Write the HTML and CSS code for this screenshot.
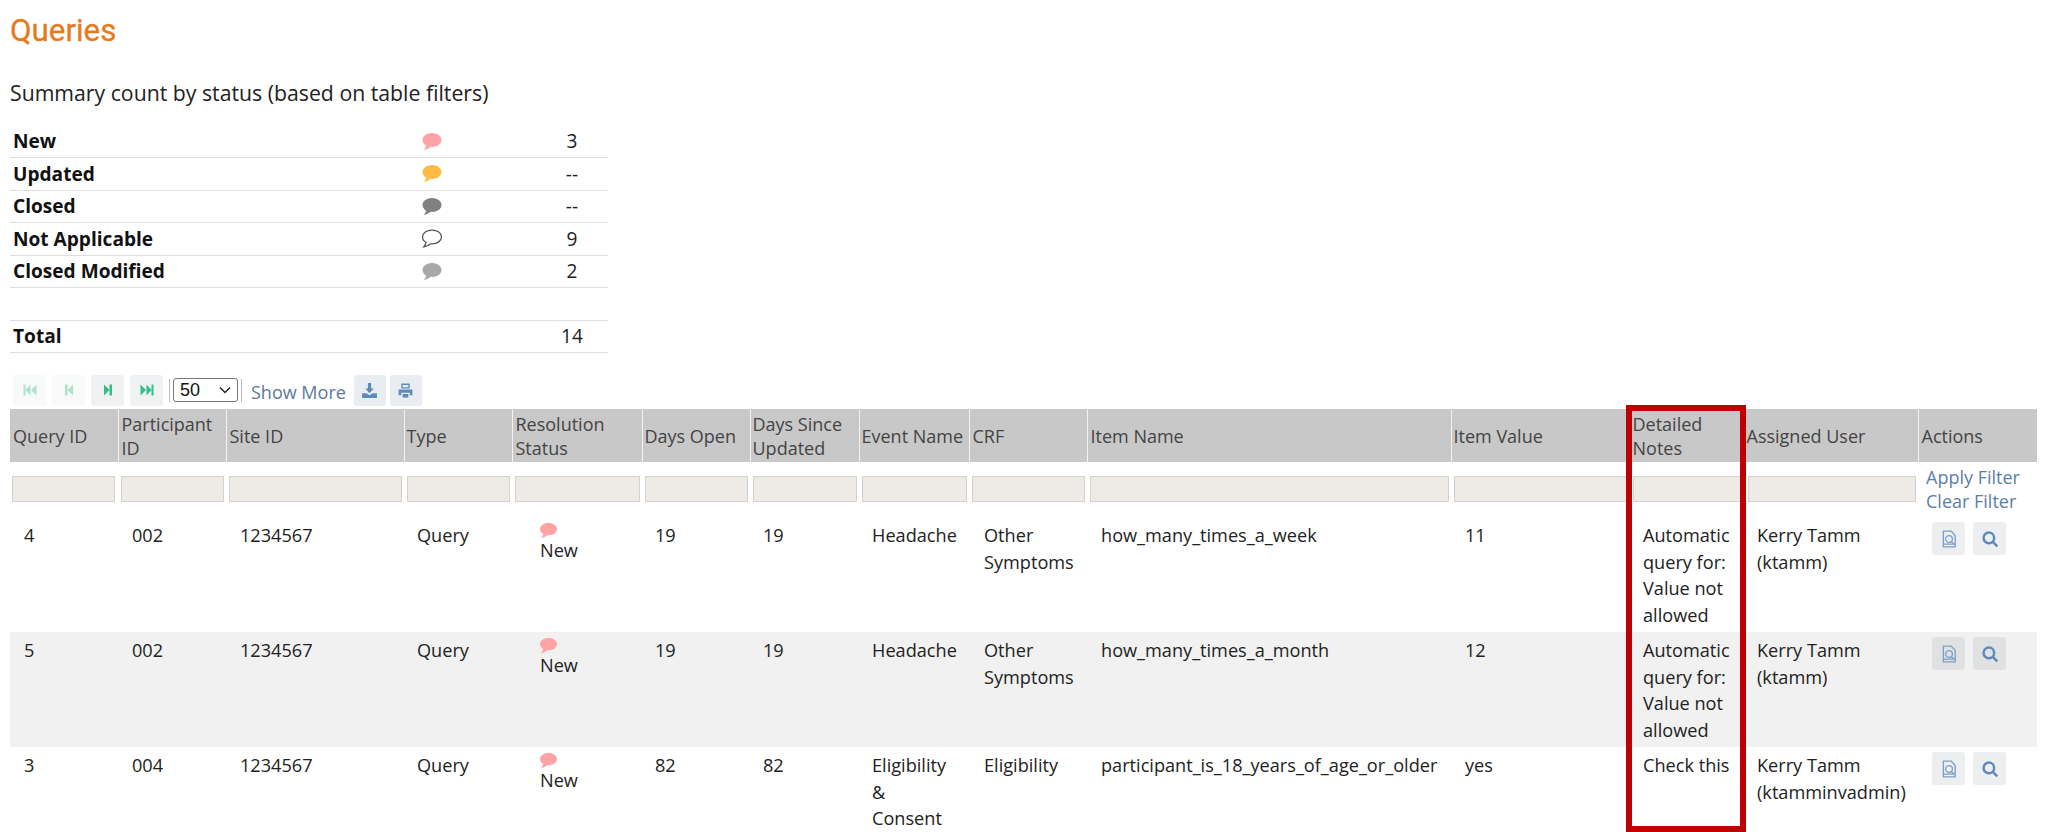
FILE: index.html
```html
<!DOCTYPE html>
<html lang="en">
<head>
<meta charset="utf-8">
<title>Queries</title>
<link rel="stylesheet" href="styles.css">
</head>
<body>
<svg class="defs" width="0" height="0" aria-hidden="true">
  <defs>
    <path id="bubble" d="M10 1C5 1 1 3.900 1 7.500c0 2.100 1.300 4 3.400 5.200C4.100 14.200 3.300 15.600 2.200 17c2.600-.4 5-1.700 6.500-3 .4 0 .9.100 1.300.100 5 0 9-2.900 9-6.600S15 1 10 1z"/>
  </defs>
</svg>
<h1 class="title">Queries</h1>
<p class="subtitle">Summary count by status (based on table filters)</p>
<table class="summary">
  <tr><th>New</th><td class="s-icon"><svg class="bubble b-new" viewBox="0 0 20 18"><use href="#bubble"/></svg></td><td class="s-val">3</td></tr>
  <tr><th>Updated</th><td class="s-icon"><svg class="bubble b-updated" viewBox="0 0 20 18"><use href="#bubble"/></svg></td><td class="s-val">--</td></tr>
  <tr><th>Closed</th><td class="s-icon"><svg class="bubble b-closed" viewBox="0 0 20 18"><use href="#bubble"/></svg></td><td class="s-val">--</td></tr>
  <tr><th>Not Applicable</th><td class="s-icon"><svg class="bubble b-na" viewBox="0 0 20 18"><use href="#bubble"/></svg></td><td class="s-val">9</td></tr>
  <tr><th>Closed Modified</th><td class="s-icon"><svg class="bubble b-mod" viewBox="0 0 20 18"><use href="#bubble"/></svg></td><td class="s-val">2</td></tr>
  <tr><th>&nbsp;</th><td></td><td></td></tr>
  <tr><th>Total</th><td></td><td class="s-val">14</td></tr>
</table>
<div class="toolbar">
  <button class="tbtn off"><svg viewBox="0 0 16 16"><path d="M1.500 2.500h2v11h-2zM8.500 2.500v11L3.500 8zM14.500 2.500v11L9 8z"/></svg></button>
  <button class="tbtn off"><svg viewBox="0 0 16 16"><path d="M4 2.500h2.500v11H4zM12 2.500v11L6.500 8z"/></svg></button>
  <button class="tbtn"><svg viewBox="0 0 16 16"><path d="M4 2.500v11L9.500 8zM9.500 2.500H12v11H9.500z"/></svg></button>
  <button class="tbtn"><svg viewBox="0 0 16 16"><path d="M1.500 2.500v11L7 8zM7.500 2.500v11l5-5.500zM12.500 2.500h2v11h-2z"/></svg></button>
  <span class="sep"></span>
  <select class="size"><option>50</option></select>
  <span class="sep"></span>
  <a class="more">Show More</a>
  <button class="tbtn blue"><svg viewBox="0 0 16 16"><path d="M6.500 1h3v5H12L8 10.500 4 6h2.500zM1 10.500h4l3 2 3-2h4V15H1z"/></svg></button>
  <button class="tbtn blue"><svg viewBox="0 0 16 16"><path d="M4 1.500h8V6H4zM5.300 2.800v2.200h5.400V2.800zM1.500 7h13v5.500H12V10H4v2.500H1.500zM5.300 11.300h5.400v3.200H5.300z" fill-rule="evenodd"/></svg></button>
</div>
<div class="tablewrap">
  <table class="grid">
    <colgroup>
      <col class="c1"><col class="c2"><col class="c3"><col class="c4"><col class="c5"><col class="c6"><col class="c7"><col class="c8"><col class="c9"><col class="c10"><col class="c11"><col class="c12"><col class="c13"><col class="c14">
    </colgroup>
    <thead>
      <tr class="heads">
        <th>Query ID</th><th>Participant ID</th><th>Site ID</th><th class="h-tight">Type</th><th>Resolution Status</th><th class="h-tight">Days Open</th><th class="h-tight">Days Since Updated</th><th class="h-tight">Event Name</th><th>CRF</th><th>Item Name</th><th class="h-tight">Item Value</th><th class="h-tight">Detailed Notes</th><th class="h-tighter">Assigned User</th><th>Actions</th>
      </tr>
      <tr class="filters">
        <td><span class="fbox"></span></td><td><span class="fbox"></span></td><td><span class="fbox"></span></td><td><span class="fbox"></span></td><td><span class="fbox"></span></td><td><span class="fbox"></span></td><td><span class="fbox"></span></td><td><span class="fbox"></span></td><td><span class="fbox"></span></td><td><span class="fbox"></span></td><td><span class="fbox"></span></td><td><span class="fbox"></span></td><td><span class="fbox"></span></td>
        <td class="flinks"><a>Apply Filter</a><a>Clear Filter</a></td>
      </tr>
    </thead>
    <tbody>
      <tr>
        <td class="p14">4</td><td class="p14">002</td><td class="p14">1234567</td><td>Query</td>
        <td class="status"><svg class="bubble small b-new" viewBox="0 0 20 18"><use href="#bubble"/></svg><span>New</span></td>
        <td>19</td><td>19</td><td class="event">Headache</td><td class="p15">Other Symptoms</td><td class="p14 item">how_many_times_a_week</td><td class="p14">11</td>
        <td>Automatic query for: Value not allowed</td><td class="user">Kerry Tamm (ktamm)</td>
        <td class="acts"><div class="actrow">
          <button class="abtn"><svg viewBox="0 0 16 16"><path class="thin" d="M3 1h7l3.500 4v10H3zM3 12.500h10.500"/><circle class="thin" cx="8" cy="8" r="3"/><path class="thin" d="M10 10.500l2.500 2"/></svg></button>
          <button class="abtn"><svg viewBox="0 0 16 16"><circle class="thick" cx="7" cy="7" r="4.700"/><path class="thick" d="M10.500 10.500l4 4"/></svg></button>
        </div></td>
      </tr>
      <tr class="alt">
        <td class="p14">5</td><td class="p14">002</td><td class="p14">1234567</td><td>Query</td>
        <td class="status"><svg class="bubble small b-new" viewBox="0 0 20 18"><use href="#bubble"/></svg><span>New</span></td>
        <td>19</td><td>19</td><td class="event">Headache</td><td class="p15">Other Symptoms</td><td class="p14 item">how_many_times_a_month</td><td class="p14">12</td>
        <td>Automatic query for: Value not allowed</td><td class="user">Kerry Tamm (ktamm)</td>
        <td class="acts"><div class="actrow">
          <button class="abtn"><svg viewBox="0 0 16 16"><path class="thin" d="M3 1h7l3.500 4v10H3zM3 12.500h10.500"/><circle class="thin" cx="8" cy="8" r="3"/><path class="thin" d="M10 10.500l2.500 2"/></svg></button>
          <button class="abtn"><svg viewBox="0 0 16 16"><circle class="thick" cx="7" cy="7" r="4.700"/><path class="thick" d="M10.500 10.500l4 4"/></svg></button>
        </div></td>
      </tr>
      <tr>
        <td class="p14">3</td><td class="p14">004</td><td class="p14">1234567</td><td>Query</td>
        <td class="status"><svg class="bubble small b-new" viewBox="0 0 20 18"><use href="#bubble"/></svg><span>New</span></td>
        <td>82</td><td>82</td><td class="event">Eligibility &amp; Consent</td><td class="p15">Eligibility</td><td class="p14 item">participant_is_18_years_of_age_or_older</td><td class="p14">yes</td>
        <td>Check this</td><td class="user">Kerry Tamm (ktamminvadmin)</td>
        <td class="acts"><div class="actrow">
          <button class="abtn"><svg viewBox="0 0 16 16"><path class="thin" d="M3 1h7l3.500 4v10H3zM3 12.500h10.500"/><circle class="thin" cx="8" cy="8" r="3"/><path class="thin" d="M10 10.500l2.500 2"/></svg></button>
          <button class="abtn"><svg viewBox="0 0 16 16"><circle class="thick" cx="7" cy="7" r="4.700"/><path class="thick" d="M10.500 10.500l4 4"/></svg></button>
        </div></td>
      </tr>
    </tbody>
  </table>
</div>
<div class="callout"></div>
</body>
</html>
```

FILE: styles.css
```css
* { box-sizing: border-box; }
html, body { margin: 0; height: 832px; overflow: hidden; background: #fff; }
body {
  position: relative;
  padding: 0 11px 0 10px;
  font-family: "Open Sans", "Noto Sans", sans-serif;
  font-size: 18px;
  color: #222;
}
.defs { position: absolute; }

.title {
  margin: 0;
  padding-top: 12px;
  height: 62px;
  font-family: Roboto, "Liberation Sans", sans-serif;
  font-size: 31.300px;
  line-height: 38px;
  font-weight: 400;
  color: #e67a1c;
  -webkit-text-stroke: 0.3px #e67a1c;
}
.subtitle {
  margin: 0;
  height: 63px;
  padding-top: 17px;
  font-size: 21.250px;
  line-height: 28px;
  color: #222;
}

.summary { width: 598px; border-collapse: collapse; table-layout: fixed; }
.summary tr { height: 32.5px; }
.summary th, .summary td { padding: 0; border-bottom: 1px solid #ddd; font-size: 19.100px; line-height: 24px; }
.summary th { width: 402px; padding-left: 3px; text-align: left; font-weight: 700; color: #111; }
.summary .s-icon { width: 40px; text-align: center; }
.summary .s-val { padding-left: 84px; text-align: center; }

.bubble { display: block; width: 22px; height: 19px; margin: 0 auto; }
.bubble.small { width: 19px; height: 17px; margin: 0; }
.b-new { fill: #ffa3a6; }
.b-updated { fill: #ffbb45; }
.b-closed { fill: #808080; }
.b-mod { fill: #a8a8a8; }
.b-na { fill: #fff; stroke: #555; stroke-width: 1.200; }

.toolbar { display: flex; align-items: center; height: 32px; margin-top: 21px; padding-left: 3px; }
.tbtn {
  flex: none;
  width: 33px; height: 31px;
  margin-right: 6px;
  padding: 0;
  display: flex; align-items: center; justify-content: center;
  border: 0; border-radius: 3px;
  background: #eff1f3;
  fill: #2fbf87;
}
.tbtn svg { width: 16px; height: 16px; display: block; }
.tbtn.off { background: #f8f9f9; fill: #a9e4cb; }
.tbtn.blue { width: 32px; margin-right: 4px; background: #e9edf1; fill: #5d8abb; }
.tbtn.blue svg { width: 17px; height: 17px; }
.sep { flex: none; width: 1px; height: 23px; background: #bbb; }
.size {
  flex: none;
  appearance: none;
  width: 65px; height: 24px;
  margin: 0 3px;
  padding: 0 0 0 6px;
  border: 1px solid #777; border-radius: 3px;
  background: #fff url("data:image/svg+xml,%3Csvg xmlns='http://www.w3.org/2000/svg' viewBox='0 0 12 8'%3E%3Cpath d='M1 1.500l5 5 5-5' fill='none' stroke='%23222' stroke-width='1.500'/%3E%3C/svg%3E") no-repeat right 6px center / 12px 8px;
  font-family: "Liberation Sans", sans-serif;
  font-size: 18px;
  color: #111;
}
.more { margin: 3px 8px 0 9px; font-size: 18px; color: #5b7a9e; white-space: nowrap; }

.tablewrap { margin-top: 3px; }
.grid { width: 2027px; border-collapse: collapse; table-layout: fixed; }
.c1 { width: 108px; } .c2 { width: 108px; } .c3 { width: 178px; } .c4 { width: 108px; }
.c5 { width: 130px; } .c6 { width: 108px; } .c7 { width: 109px; } .c8 { width: 110px; }
.c9 { width: 118px; } .c10 { width: 364px; } .c11 { width: 179px; } .c12 { width: 115px; }
.c13 { width: 173px; } .c14 { width: 119px; }

.heads { height: 53px; }
.heads th {
  padding: 0 3px;
  background: #c8c8c8;
  border-right: 1px solid #f2f2f2;
  font-size: 18px;
  line-height: 24px;
  font-weight: 400;
  text-align: left;
  color: #444;
}
.heads .h-tight { padding-left: 2px; padding-right: 0; }
.heads .h-tighter { padding-left: 1px; padding-right: 0; }
.heads th:last-child { border-right: 0; padding-left: 3px; }

.filters { height: 55px; }
.filters td { padding: 0 2px 0 3px; vertical-align: top; }
.filters td:first-child { padding: 0 3px 0 2px; }
.fbox {
  display: block;
  height: 26px;
  margin-top: 14px;
  background: #eeebe7;
  border: 1px solid #d4d2ce;
}
.filters .flinks { padding: 3px 0 0 8px; font-size: 18px; line-height: 24px; color: #5b7fa6; }
.flinks a { display: block; white-space: nowrap; }

.grid tbody td {
  padding: 5px 8px 4px 13px;
  vertical-align: top;
  font-size: 18.150px;
  line-height: 26.500px;
}
.grid tbody .p14 { padding-left: 14px; }
.grid tbody .p15 { padding-left: 15px; }
.grid tbody .event { padding-right: 10px; }
.grid tbody .item { padding-right: 0; white-space: nowrap; }
.grid tbody .user { padding-left: 12px; padding-right: 0; }
.alt td { background: #f1f1f1; }
.grid tbody .status { padding: 5px 4px 0 12px; line-height: 22px; }
.status .bubble { margin-left: 15px; }
.status span { display: block; margin: 0 0 0 16px; }
.grid tbody .acts { padding: 5px 0 0 14px; }
.actrow { display: flex; gap: 8px; }
.abtn {
  width: 33px; height: 33px;
  padding: 0;
  display: flex; align-items: center; justify-content: center;
  border: 0; border-radius: 3px;
  background: #eceef0;
}
.alt .abtn { background: #dfe1e3; }
.abtn svg { width: 18px; height: 18px; display: block; fill: none; }
.thin { stroke: #7d9fc6; stroke-width: 1.200; fill: none; }
.thick { stroke: #5d8abb; stroke-width: 2.200; fill: none; }

.callout {
  position: absolute;
  left: 1626px; top: 405px;
  width: 120px; height: 427px;
  border: 6px solid #c00000;
  pointer-events: none;
}
```
